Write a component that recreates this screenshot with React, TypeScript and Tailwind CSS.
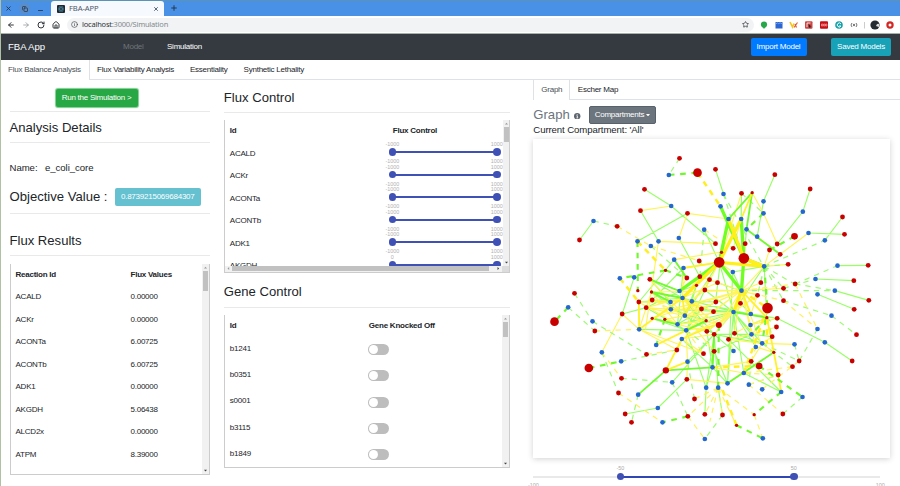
import React from 'react';
import { ArrowLeft, ArrowRight, House, RotateCw, Star, X, Plus, Info, Copy, Minus } from 'lucide-react';

type Pt = [number, number];

const blue: Pt[] = [
  [387,90],[394,183],[161,228],[293,289],[356,289],[333,303],[417,279],[493,254],[403,344],[431,369],[283,397],[240,400],
  [419,438],[428,459],[456,469],[392,471],[551,147],[542,184],[671,169],[671,205],[789,200],[806,264],[855,286],[566,222],
  [604,222],[620,253],[652,275],[673,364],[579,381],[827,402],[893,362],[833,448],[885,437],[605,437],[85,487],[158,529],
  [393,493],[435,512],[413,538],[439,556],[298,553],[426,582],[349,600],[186,622],[244,649],[443,650],[518,667],[295,749],
  [397,712],[499,728],[535,728],[354,789],[368,832],[495,882],[581,501],[633,507],[632,540],[635,568],[667,595],[648,606],
  [764,598],[855,592],[875,512],[833,552],[581,618],[612,684],[627,719],[667,733],[563,715],[724,741],[788,756],[669,880],
];

const red: Pt[] = [
  [419,40],[527,73],[314,133],[302,197],[443,205],[232,244],[119,285],[527,296],[478,348],[330,403],[441,399],[480,395],
  [509,404],[533,413],[495,435],[337,465],[297,471],[528,471],[104,445],[605,145],[705,89],[811,132],[908,216],[914,268],
  [616,296],[580,310],[712,297],[689,315],[721,328],[745,358],[663,413],[731,430],[766,417],[985,361],[942,407],[987,466],
  [653,451],[731,467],[602,475],[165,558],[247,507],[319,488],[485,492],[521,500],[501,559],[523,568],[411,615],[320,628],
  [491,626],[523,619],[245,700],[236,744],[441,703],[464,762],[256,807],[275,832],[444,814],[495,808],[712,520],[710,546],
  [697,575],[584,565],[566,583],[778,648],[758,665],[937,648],[950,569],[943,493],[634,649],[715,690],[729,807],[548,810],
];

const smallRed: Pt[] = [
  [377,376],[470,421],[294,437],[335,441],[637,143],[545,322],[337,520],[375,523],[499,527],[681,518],[702,622],[643,809],[590,841],
];

const sized: [number, number, number][] = [
  [473,83,13],[538,352,16],[612,340,16],[683,489,16],[44,530,13],[147,669,13],[764,274,10],[537,540,9],[378,676,9.5],[658,663,10],
];

type Style = { color: string; width: number; dash?: string };
const edgeStyles: Record<string, Style> = {
  g: { color: '#98ff66', width: 3.4 },
  m: { color: '#72fa30', width: 5.5 },
  G: { color: '#70ff20', width: 10 },
  d: { color: '#9dfa74', width: 3.6, dash: '16 15' },
  D: { color: '#72f72f', width: 6.5, dash: '17 17' },
  y: { color: '#fff45a', width: 3.4 },
  n: { color: '#fff22b', width: 5.5 },
  Y: { color: '#fff01c', width: 10 },
  e: { color: '#fff05c', width: 3.6, dash: '16 15' },
  E: { color: '#ffef20', width: 7.5, dash: '17 15' },
};

const edges: [string, number[]][] = [
  ['g', [314,133,394,183, 394,183,527,296, 302,197,356,289, 443,205,293,289, 161,228,119,285, 527,73,551,147, 417,279,480,395,
    705,89,671,169, 671,169,652,275, 811,132,789,200, 789,200,712,297, 908,216,855,286, 914,268,806,264, 893,362,985,361,
    827,402,942,407, 833,448,943,493, 885,437,987,466, 712,520,855,592, 855,592,937,648, 283,397,247,507, 247,507,319,488,
    354,789,256,807, 441,703,354,789, 605,145,604,222, 493,254,538,352, 620,253,616,296, 620,253,605,437, 518,667,499,728,
    439,556,298,553, 439,556,499,728, 435,512,523,568, 523,568,518,667, 523,568,499,728, 523,568,535,728, 523,568,443,650,
    523,568,397,712, 581,501,523,568, 581,501,439,556, 581,501,413,538, 581,501,428,459, 581,501,393,493, 581,501,495,435,
    581,501,563,715, 581,501,612,684, 581,501,635,568, 581,501,667,595, 581,501,648,606, 581,501,681,518, 581,501,485,492,
    538,352,581,501, 538,352,435,512, 566,583,724,741, 612,684,724,741, 579,381,605,437, 579,381,563,715, 330,403,392,471,
    330,403,428,459, 335,441,435,512, 335,441,392,471, 337,465,392,471, 297,471,392,471, 297,471,428,459, 319,488,439,556,
    337,520,413,538, 337,520,439,556, 403,344,441,399, 431,369,413,538, 431,369,337,465, 403,344,297,471, 673,364,579,381,
    673,364,681,518, 673,364,581,501, 456,469,528,471, 456,469,681,518, 393,493,499,527, 535,728,548,810, 499,728,495,808,
    518,667,426,582, 518,667,563,715, 523,619,635,568, 523,568,667,595,
    419,438,319,488, 419,438,470,421, 419,438,330,403, 456,469,413,538, 456,469,470,421, 428,459,523,568, 480,395,435,512,
    509,404,439,556, 533,413,605,437, 545,322,527,471, 528,471,413,538, 485,492,439,556, 521,500,581,501, 501,559,518,667,
    501,559,581,501, 584,565,667,595, 602,475,633,507, 584,565,581,501, 633,507,712,520, 632,540,681,518, 635,568,697,575,
    523,568,635,568, 523,619,518,667, 523,619,563,715, 581,618,523,568, 541,345,428,459]],
  ['y', [302,197,394,183, 443,205,566,222, 443,205,417,279, 356,289,527,296, 356,289,317,553, 403,344,538,322, 247,507,186,622,
    247,507,298,553, 319,488,428,459, 319,488,393,493, 298,553,413,615, 298,553,491,626, 298,553,335,441, 298,553,319,488,
    605,145,538,352, 637,143,566,222, 673,364,806,264, 673,364,689,315, 673,364,745,358, 671,205,712,297, 671,205,637,143,
    652,275,721,328, 667,595,764,598, 441,703,563,715, 443,650,441,703, 605,437,495,435, 605,437,509,404, 605,437,528,471,
    605,437,485,492, 605,437,521,500, 605,437,537,540, 605,437,439,556, 605,437,393,493, 605,437,584,565, 605,437,602,475,
    605,437,635,568, 605,437,648,606, 605,437,663,413, 605,437,731,430, 605,437,673,364, 605,437,653,451, 605,437,480,395,
    605,437,633,507, 605,437,681,518, 605,437,335,441, 605,437,337,520, 335,441,428,459, 337,465,456,469, 375,523,435,512,
    375,523,413,538, 337,520,393,493, 337,520,501,559, 335,441,413,538, 330,403,435,512, 428,459,499,527, 428,459,501,559,
    428,459,521,500, 428,459,537,540, 435,512,485,492, 435,512,537,540, 435,512,523,619, 439,556,499,527, 439,556,537,540,
    439,556,443,650, 581,501,499,527, 581,501,537,540, 581,501,435,512, 581,501,501,559, 581,501,426,582, 633,507,681,518,
    632,540,681,518, 635,568,681,518, 566,583,635,568, 566,583,667,595, 426,582,523,568, 426,582,491,626, 667,595,612,684,
    563,715,702,622, 518,667,634,649, 518,667,612,684, 538,352,604,222, 579,381,538,352, 431,369,428,459, 431,369,538,352,
    470,421,428,459, 470,421,538,352, 495,435,456,469, 441,399,419,438, 480,395,428,459, 509,404,456,469, 533,413,428,459,
    528,471,435,512, 485,492,393,493, 297,471,413,538, 297,471,456,469, 337,465,435,512, 319,488,435,512, 456,469,521,500,
    602,475,581,501, 602,475,537,540, 584,565,632,540, 653,451,633,507, 653,451,581,501, 413,538,501,559, 413,538,499,527,
    523,568,581,501, 632,540,712,520, 635,568,710,546, 648,606,702,622, 667,595,697,575, 667,595,702,622, 581,618,566,583,
    616,296,605,437, 580,310,604,222, 605,437,663,595, 605,437,632,540, 335,441,298,553, 495,435,538,352]],
  ['d', [419,40,387,90, 161,228,232,244, 104,445,158,529, 85,487,165,558, 158,529,320,628, 186,622,236,744, 245,700,397,712,
    244,649,411,615, 397,712,444,814, 333,303,441,399, 493,254,480,395, 551,147,612,340, 551,147,671,364, 673,364,745,358,
    673,364,731,430, 673,364,764,417, 673,364,731,467, 673,364,663,413, 673,364,855,286, 766,417,893,362, 731,430,827,402,
    766,417,885,437, 731,467,875,512, 875,512,950,569, 833,552,778,648, 764,598,778,648, 667,595,758,665, 667,595,778,648,
    548,810,495,882, 788,756,729,807, 295,749,275,832, 634,649,627,719, 464,762,443,650, 439,556,523,619, 605,437,885,437,
    605,145,671,205, 681,518,710,546, 681,518,697,575, 673,364,653,451, 627,719,715,690]],
  ['e', [232,244,333,303, 333,303,480,348, 493,254,580,310, 165,558,298,553, 186,622,245,700, 236,744,368,832, 320,628,411,615,
    444,814,495,882, 535,728,444,814, 535,728,495,808, 535,728,548,810, 535,728,464,762, 535,728,590,841, 535,728,643,809,
    535,728,510,830, 627,719,729,807, 627,719,715,690, 667,733,778,648, 643,809,669,880, 731,467,833,552, 605,437,731,467,
    605,437,766,417, 758,665,612,684, 766,417,833,552, 439,556,491,626, 612,684,715,690, 634,649,648,606]],
  ['m', [637,143,566,222, 637,143,620,253, 620,253,721,328, 378,676,518,667, 378,676,295,749, 702,622,563,715, 335,441,428,459,
    439,556,499,527, 330,403,419,438, 403,344,441,399, 581,501,681,518, 523,568,518,667, 337,520,413,538, 335,441,392,471]],
  ['n', [637,143,604,222, 378,676,426,582, 378,676,443,650, 426,582,411,615, 428,459,435,512, 702,622,715,690,
    702,622,681,518, 715,690,724,741, 428,459,485,492, 298,553,297,471, 298,553,428,459, 349,600,439,556, 605,437,581,501,
    605,437,681,518, 605,437,633,507, 426,582,523,540, 431,369,538,352, 456,469,435,512]],
  ['G', [566,222,538,352, 604,222,612,340, 542,184,612,340, 538,352,419,438, 538,352,605,437, 612,340,605,437, 612,340,673,364]],
  ['Y', [604,222,538,352, 566,222,612,340, 538,352,673,364, 612,340,673,364, 538,352,428,459, 605,437,581,501]],
  ['D', [387,90,473,83, 293,289,294,437, 377,376,240,400, 85,487,44,530, 147,669,244,649, 375,523,349,600, 671,205,620,253,
    764,274,689,315, 673,364,683,489, 683,489,667,595, 658,663,788,756, 724,741,643,809, 590,841,669,880, 444,814,368,832,
    537,540,535,728, 377,376,441,399, 681,518,635,568]],
  ['E', [473,83,542,184, 293,289,377,376, 240,400,297,471, 605,437,683,489, 683,489,612,684, 518,667,658,663, 683,489,681,595,
    590,841,548,735]],
];

function NetworkGraph() {
  return (
    <svg className="block h-full w-full" viewBox="-20.5 -18 1069.5 957" preserveAspectRatio="none">
      {edges.map(([kind, p], k) => {
        const s = edgeStyles[kind];
        let d = '';
        for (let i = 0; i < p.length; i += 4) d += `M${p[i]} ${p[i + 1]}L${p[i + 2]} ${p[i + 3]}`;
        return <path key={k} d={d} fill="none" stroke={s.color} strokeWidth={s.width} strokeDasharray={s.dash} />;
      })}
      {blue.map(([x, y]) => <circle key={`${x}-${y}`} cx={x} cy={y} r="7" fill="#2468cf" />)}
      {red.map(([x, y]) => <circle key={`${x}-${y}`} cx={x} cy={y} r="7.2" fill="#c80000" />)}
      {smallRed.map(([x, y]) => <circle key={`${x}-${y}`} cx={x} cy={y} r="5" fill="#c80000" />)}
      {sized.map(([x, y, r]) => <circle key={`${x}-${y}`} cx={x} cy={y} r={r} fill="#c80000" />)}
    </svg>
  );
}

function BrowserChrome() {
  return (
    <>
      <div className="flex h-4 shrink-0 items-end border-t border-[#5a93b4] bg-[#4891e6] pl-[3px] text-[#26394f]">
        <div className="flex h-[15px] w-[47px] items-center justify-between pr-[7px] pl-[1px]">
          <X size={7} strokeWidth={3} />
          <span className="flex size-[11px] items-center justify-center rounded-full bg-[#5b8ec9]"><Copy size={6} strokeWidth={3} /></span>
          <Minus size={7} strokeWidth={3} className="mt-1" />
        </div>
        <div className="flex h-[15px] w-[113px] items-center rounded-t-[3px] bg-[#f6f9fd] pr-[5px] pl-[6px]">
          <svg className="h-2 w-2" viewBox="0 0 16 16">
            <rect width="16" height="16" rx="2" fill="#20262e" />
            <g fill="none" stroke="#4e91ab" strokeWidth="1">
              <ellipse cx="8" cy="8" rx="6" ry="2.4" />
              <ellipse cx="8" cy="8" rx="6" ry="2.4" transform="rotate(60 8 8)" />
              <ellipse cx="8" cy="8" rx="6" ry="2.4" transform="rotate(120 8 8)" />
            </g>
          </svg>
          <span className="ml-1 flex-1 font-['Noto_Sans',sans-serif] text-[7.6px] tracking-[-0.1px] text-[#4c5866]">FBA-APP</span>
          <X size={6} strokeWidth={3} />
        </div>
        <Plus size={8} strokeWidth={3} className="mb-[4px] ml-[6px]" />
      </div>
      <div className="flex h-[18px] shrink-0 items-center border-b border-[#a5b3a6] bg-white pl-[6px] text-[#303438]">
        <div className="flex w-[60px] items-center gap-[7px]">
          <ArrowLeft size={8} strokeWidth={3} />
          <ArrowRight size={8} strokeWidth={2} className="text-[#81868a]" />
          <RotateCw size={8} strokeWidth={3} />
          <House size={8} strokeWidth={3} />
        </div>
        <div className="flex h-[14px] w-[687px] items-center rounded-full bg-[#f1f3f4] pr-[5px] pl-[4px]">
          <Info size={7} strokeWidth={2} />
          <span className="ml-[4px] flex-1 font-['Noto_Sans',sans-serif] text-[7.5px] tracking-[-0.21px] text-[#858a8e]"><span className="text-[#303438]">localhost</span>:3000/Simulation</span>
          <Star size={7} strokeWidth={2.5} />
        </div>
        <svg className="ml-[4px] h-3 w-[140px]" viewBox="0 0 140 12">
          <circle cx="6" cy="5.5" r="3.1" fill="#28a74a" /><path d="M4 7l2 3 2-3" fill="#28a74a" />
          <path d="M17.5 3h7v6.5h-7z" fill="#2d65d1" /><path d="M18 4.8l1.5-1 1 1 1.5-1 2.5 1" stroke="#75a5ef" fill="none" />
          <path d="M32 3l2.5 5L36 4.5" stroke="#f5c51e" strokeWidth="1.6" fill="none" /><path d="M36 8.5l3.5-5M37 5l1.5 3.5" stroke="#e2542c" strokeWidth="1.1" fill="none" />
          <rect x="47" y="2.3" width="7.5" height="7.5" rx="1" fill="#d04545" /><path d="M49 4h3.5M49 4v4" stroke="#fff" strokeWidth=".8" fill="none" /><path d="M50.5 5l3 2.5-1.5.2.8 1.6-2-1z" fill="#262626" />
          <rect x="62" y="2.3" width="8" height="7.5" rx="1" fill="#c90e13" /><path d="M63.5 5h1.3v2h-1.3zM65.6 5h1.3v2h-1.3zM67.6 5h1.3v2h-1.3z" fill="none" stroke="#ffd6d6" strokeWidth=".5" />
          <circle cx="81" cy="6" r="3.8" fill="#16a2a8" /><path d="M83 5a2 2 0 1 0 0 2H81" stroke="#fff" fill="none" />
          <path d="M93.6 4.2q-1 1.8 0 3.6M98.4 4.2q1 1.8 0 3.6M94.9 4.7l2.2 2.6M97.1 4.7l-2.2 2.6" stroke="#555" strokeWidth=".8" fill="none" />
          <path d="M106.5 3v6.5" stroke="#aaa" strokeWidth=".6" />
          <circle cx="117" cy="6" r="4.6" fill="#252d32" /><path d="M118 7q1-3 3-2v3" fill="#ddd" />
          <circle cx="132" cy="6" r="3.7" fill="#d42724" /><circle cx="132" cy="6" r="1.5" fill="#fff" />
        </svg>
      </div>
    </>
  );
}

function NavBar() {
  return (
    <nav className="flex h-[26px] shrink-0 items-center bg-[#343a40] pl-[7px] text-[8px] tracking-[-0.24px] text-white">
      <div className="w-[115px] text-[9.6px] tracking-[-0.05px]">FBA App</div>
      <div className="w-[44px] text-[#70757a]">Model</div>
      <div className="flex-1">Simulation</div>
      <button className="mr-[24.5px] h-[18px] w-[56px] rounded-[2px] bg-[#007bff]">Import Model</button>
      <button className="mr-[9px] h-[18px] w-[60px] rounded-[2px] bg-[#17a2b8]">Saved Models</button>
    </nav>
  );
}

function VScroll({ thumb }: { thumb: string }) {
  return (
    <div className="flex w-[7px] shrink-0 flex-col items-center bg-[#f1f1f1]">
      <svg className="h-[7px] w-[7px] shrink-0" viewBox="0 0 7 7"><path d="M2 4.5 3.5 2.8 5 4.5z" fill="#999" /></svg>
      <div className={`w-[5px] bg-[#c1c1c1] ${thumb}`} />
      <svg className="mt-auto h-[7px] w-[7px] shrink-0" viewBox="0 0 7 7"><path d="M2 2.8 3.5 4.5 5 2.8z" fill="#444" /></svg>
    </div>
  );
}

function Title({ children, className }: { children: React.ReactNode; className: string }) {
  return <h3 className={`flex shrink-0 items-center border-b border-[#e9e9e9] text-[13.1px] ${className}`}>{children}</h3>;
}

const frame = 'flex shrink-0 overflow-hidden border-l border-r border-b border-[#ccc]';

const fluxes = [
  ['ACALD', '0.00000'], ['ACKr', '0.00000'], ['ACONTa', '6.00725'], ['ACONTb', '6.00725'], ['ADK1', '0.00000'],
  ['AKGDH', '5.06438'], ['ALCD2x', '0.00000'], ['ATPM', '8.39000'], ['Biomass_Ecoli', '0.87392'],
];

function AnalysisColumn() {
  return (
    <section className="flex w-[200.5px] flex-col">
      <div className="flex h-[32px] shrink-0 items-center border-b border-[#e9e9e9] pt-[5px] pl-[46px]">
        <button className="h-[18.5px] w-[82px] rounded-[2px] bg-[#28a745] text-[8px] tracking-[-0.24px] text-white shadow-[0_0_1px_1px_#7ccb8e]">Run the Simulation &gt;</button>
      </div>
      <Title className="h-[31px] pt-[2px]">Analysis Details</Title>
      <div className="flex h-[40px] shrink-0 items-end pb-[8px] text-[9.6px] leading-[14px] tracking-[-0.05px]"><span className="w-[35.5px]">Name:</span>e_coli_core</div>
      <div className="flex h-[31px] shrink-0 items-center border-b border-[#e9e9e9] text-[13.1px]">
        <span className="w-[105.5px] pb-[3px]">Objective Value :</span>
        <span className="mb-[2px] flex h-[18px] w-[85.5px] items-center justify-center rounded-[2px] bg-[#65c1d0] text-[8px] tracking-[-0.24px] text-white">0.8739215069684307</span>
      </div>
      <Title className="h-[42px] pt-[13px]">Flux Results</Title>
      <div className={`mt-[7.5px] h-[211.5px] ${frame}`}>
        <div className="flex-1 pl-[5px] text-[8px] tracking-[-0.24px]">
          <div className="flex h-[22.5px] items-center font-bold"><span className="w-[115px]">Reaction Id</span>Flux Values</div>
          {fluxes.map(([id, value]) => <div key={id} className="flex h-[22.5px] items-center"><span className="w-[115px]">{id}</span>{value}</div>)}
        </div>
        <VScroll thumb="h-[20px]" />
      </div>
    </section>
  );
}

function FluxSlider({ min }: { min: string }) {
  return (
    <div className="relative h-full w-[104.5px] text-[5.4px] leading-[5px] tracking-normal text-[#b0b0b0]">
      <div className="absolute top-[9px] h-[2px] w-full bg-[#3f51b5]" />
      <div className="absolute top-[6.3px] -left-[3.7px] size-[7.4px] rounded-full bg-[#3f51b5]" />
      <div className="absolute top-[6.3px] -right-[3.7px] size-[7.4px] rounded-full bg-[#3f51b5]" />
      <span className="absolute top-0 left-0 -translate-x-1/2">{min}</span>
      <span className="absolute top-0 right-0 translate-x-1/2">1000</span>
      <span className="absolute top-[17.2px] left-0 -translate-x-1/2">-1000</span>
      <span className="absolute top-[17.2px] right-0 translate-x-1/2">1000</span>
    </div>
  );
}

function ControlColumn() {
  return (
    <section className="flex w-[286px] flex-col">
      <Title className="h-[33px] pt-[3px]">Flux Control</Title>
      <div className={`mt-[7px] h-[153px] flex-col ${frame}`}>
        <div className="flex h-[145.5px] shrink-0 overflow-hidden">
          <div className="w-[278px] shrink-0 overflow-hidden pl-[5px] text-[8px] tracking-[-0.24px]">
            <div className="flex h-[22px] items-center font-bold"><span className="w-[163px]">Id</span>Flux Control</div>
            {['ACALD', 'ACKr', 'ACONTa', 'ACONTb', 'ADK1', 'AKGDH'].map((id) => (
              <div key={id} className="flex h-[22.5px] items-center"><span className="w-[162.5px] pt-px">{id}</span><FluxSlider min={id === 'AKGDH' ? '0' : '-1000'} /></div>
            ))}
          </div>
          <VScroll thumb="h-[15px]" />
        </div>
        <div className="flex h-[6.5px] items-center bg-[#f1f1f1]">
          <svg className="h-[7px] w-[7px]" viewBox="0 0 7 7"><path d="M4.2 2 2.5 3.5 4.2 5z" fill="#999" /></svg>
          <div className="h-[5px] w-[258px] bg-[#c1c1c1]" />
          <svg className="ml-[6px] h-[7px] w-[7px]" viewBox="0 0 7 7"><path d="M2.5 2 4.2 3.5 2.5 5z" fill="#444" /></svg>
          <div className="ml-auto h-full w-[7px] bg-[#dcdcdc]" />
        </div>
      </div>
      <Title className="h-[35px] pt-[4px]">Gene Control</Title>
      <div className={`mt-[7px] h-[153px] ${frame}`}>
        <div className="flex-1 pl-[5px] text-[8px] tracking-[-0.24px]">
          <div className="flex h-[20.5px] items-center pt-px font-bold"><span className="w-[139px]">Id</span>Gene Knocked Off</div>
          {['b1241', 'b0351', 's0001', 'b3115', 'b1849'].map((id) => (
            <div key={id} className="flex h-[26.3px] items-center">
              <span className="w-[138.5px]">{id}</span>
              <span className="mt-[2px] flex h-[11px] w-[21px] items-center rounded-full bg-[#bdbdbd] pl-[1px]"><span className="size-[9px] rounded-full bg-white" /></span>
            </div>
          ))}
        </div>
        <VScroll thumb="h-[15px]" />
      </div>
    </section>
  );
}

function GraphColumn() {
  return (
    <section className="flex w-[367px] flex-col">
      <div className="flex h-[20px] shrink-0 text-[8px] tracking-[-0.24px]">
        <div className="flex w-[37px] items-center justify-center border-r border-l border-[#dee2e6] text-[#495057]">Graph</div>
        <div className="flex flex-1 items-center border-b border-[#dee2e6] pl-[7.5px]">Escher Map</div>
      </div>
      <div className="mt-[6px] flex h-[18px] shrink-0 items-center text-[13.1px] text-[#6c757d]">
        <span className="w-[41px]">Graph</span>
        <svg className="mt-[2px] h-[6.4px] w-[6.4px]" viewBox="0 0 16 16">
          <circle cx="8" cy="8" r="8" fill="#5d666e" />
          <path d="M8 3v2.5M6 7h2.5v5M6 12.3h4.5" fill="none" stroke="#fff" strokeWidth="2" />
        </svg>
        <button className="ml-[8px] flex h-[18px] w-[67.5px] items-center justify-center gap-[2px] rounded-[2px] border border-[#59616a] bg-[#6c757d] text-[8px] tracking-[-0.24px] text-white">
          Compartments
          <svg className="h-[2.5px] w-[4px]" viewBox="0 0 8 5"><path d="M0 0h8L4 5z" fill="#fff" /></svg>
        </button>
      </div>
      <div className="flex h-[12px] shrink-0 items-center text-[9.6px] tracking-[-0.09px]">Current Compartment: 'All'</div>
      <div className="mt-[3px] h-[319px] w-[356.5px] shrink-0 bg-white shadow-[0_1px_6px_rgba(0,0,0,0.18)]">
        <NetworkGraph />
      </div>
      <div className="relative mt-[17.5px] h-[2px] w-[347px] shrink-0 bg-[#e9e9e9] text-[5.4px] leading-[5px] text-[#aaa]">
        <div className="absolute left-[87px] h-[2px] w-[173.5px] bg-[#3046b5]" />
        <div className="absolute -top-[2.7px] left-[83.3px] size-[7.4px] rounded-full bg-[#3f51b5]" />
        <div className="absolute -top-[2.7px] left-[256.8px] size-[7.4px] rounded-full bg-[#3f51b5]" />
        <span className="absolute -top-[10px] left-[87px] -translate-x-1/2">-50</span>
        <span className="absolute -top-[10px] left-[260.5px] -translate-x-1/2">50</span>
        <span className="absolute top-[7px] left-0 -translate-x-1/2">-100</span>
        <span className="absolute top-[7px] left-[347px] -translate-x-1/2">100</span>
      </div>
    </section>
  );
}

export default function App() {
  return (
    <div className="flex h-[486px] w-[900px] flex-col overflow-hidden border-l border-[#b1c1a5] bg-white font-['Liberation_Sans',Arial,sans-serif] leading-normal text-[#212529]">
      <BrowserChrome />
      <NavBar />
      <div className="flex h-[20px] shrink-0 text-[8px] tracking-[-0.24px]">
        <div className="flex w-[89px] items-center border-r border-[#dee2e6] pl-[7px] text-[#495057]">Flux Balance Analysis</div>
        <div className="flex flex-1 items-center gap-[16px] border-b border-[#dee2e6] pl-[7px]">
          <span>Flux Variability Analysis</span><span>Essentiality</span><span>Synthetic Lethality</span>
        </div>
      </div>
      <main className="flex min-h-0 flex-1 pl-[8.5px]">
        <AnalysisColumn />
        <div className="w-[14px] shrink-0" />
        <ControlColumn />
        <div className="w-[23.5px] shrink-0" />
        <GraphColumn />
      </main>
    </div>
  );
}
